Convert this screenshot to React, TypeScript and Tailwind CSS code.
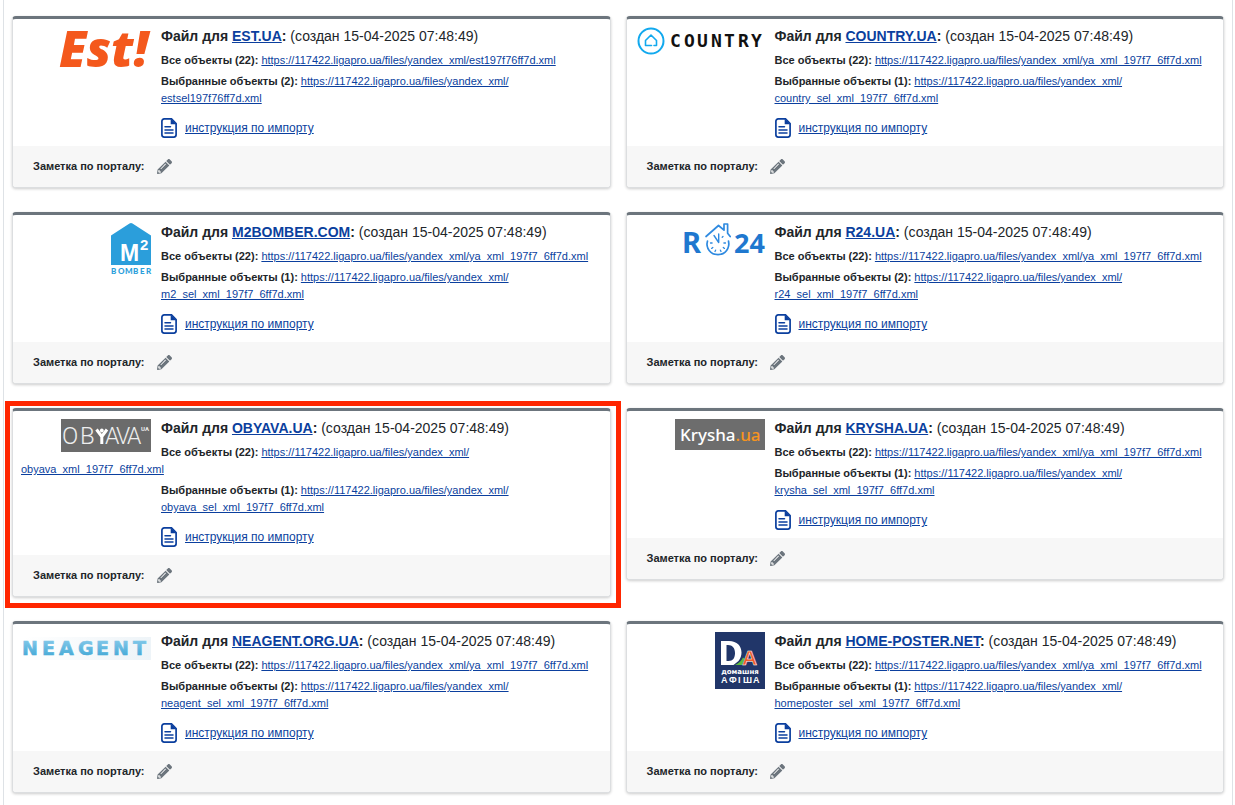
import type { ReactNode } from "react";
import { FaPencilAlt } from "react-icons/fa";

const BASE_URL = "https://117422.ligapro.ua/files/yandex_xml/";
const CREATED_AT = "15-04-2025 07:48:49";

interface Portal {
  name: string;
  logo: ReactNode;
  allFile: string;
  selectedFile: string;
  selectedCount: number;
  highlighted?: boolean;
}

function EstLogo() {
  return (
    <svg width="92" height="44" viewBox="0 0 92 44" overflow="visible" role="img" aria-label="Est!">
      <text x="0" y="40" fontFamily="'Open Sans', sans-serif" fontSize="49" fontWeight="800" fontStyle="italic" fill="#f4581c">
        Est!
      </text>
    </svg>
  );
}

function CountryLogo() {
  return (
    <svg width="128" height="28" viewBox="0 0 128 28" role="img" aria-label="Country">
      <circle cx="14" cy="14" r="12.5" fill="none" stroke="#12a9ee" strokeWidth="2" />
      <path
        d="M8.5 18.5v-5L14 8l5.500 5.500v5h-2.500M8.500 18.500h6"
        fill="none"
        stroke="#12a9ee"
        strokeWidth="1.6"
        strokeLinecap="round"
        strokeLinejoin="round"
      />
      <text
        x="33 47 60 74 87 101 114"
        y="20"
        fontFamily="'DejaVu Sans Mono', monospace"
        fontSize="18"
        fontWeight="700"
        fill="#111"
      >
        COUNTRY
      </text>
    </svg>
  );
}

function M2BomberLogo() {
  return (
    <svg width="40" height="52" viewBox="0 0 40 52" overflow="visible" role="img" aria-label="M2 Bomber">
      <path d="M0 12.5 18.5.6a2.6 2.6 0 0 1 3 0L40 12.5V42H0z" fill="#2b9edb" />
      <text x="9" y="38" fontFamily="'Liberation Sans', sans-serif" fontSize="23" fontWeight="700" fill="#fff">
        M
      </text>
      <text x="29" y="27" fontFamily="'Liberation Sans', sans-serif" fontSize="15" fontWeight="700" fill="#fff">
        2
      </text>
      <text x="0 7 14 22 29 35" y="51" fontFamily="Lato, sans-serif" fontSize="8" fontWeight="900" fill="#2b9edb">
        BOMBER
      </text>
    </svg>
  );
}

function R24Logo() {
  return (
    <svg width="81" height="34" viewBox="0 0 81 34" overflow="visible" role="img" aria-label="R24">
      <g fontFamily="'Noto Sans', sans-serif" fontWeight="700" fill="#1f78cf">
        <text x="-2" y="30" fontSize="29">R</text>
        <text x="50" y="30" fontSize="27">24</text>
      </g>
      <g fill="none" stroke="#2f8ae0" strokeWidth="1.7" strokeLinecap="round" strokeLinejoin="round">
        <path d="M22 13.500 34.500 2.500 40 7.200V1h3.600v9.300l2.600 3.200" />
        <path d="M23.500 18c-2 7 3 13.600 10.500 13.600S46 25 44.500 18" />
        <path d="M30 12.500l4.700 7V11" strokeWidth="1.400" />
        <path
          d="M26.500 20h1.600M41.500 20h-1.600M27.600 25.400l1.200-1M40.500 25.400l-1.200-1M31 28.500l.6-1.300M37 28.500l-.6-1.300M39 13.500l-.8.8"
          strokeWidth="1.300"
        />
      </g>
    </svg>
  );
}

function ObyavaLogo() {
  return (
    <svg width="90" height="33" viewBox="0 0 90 33" role="img" aria-label="Obyava.ua">
      <rect width="90" height="33" fill="#6b6b6b" />
      <g fontFamily="Roboto, sans-serif" fontWeight="300" fill="#eee">
        <text x="1 19" y="25" fontSize="24">
          OB
        </text>
        <text x="44 55 66" y="25" fontSize="23">
          AVA
        </text>
      </g>
      <path d="M35.500 10.500 40.800 17.500v7.500M46 10.500 40.800 17.500" fill="none" stroke="#fff" strokeWidth="3" />
      <circle cx="40.800" cy="11.500" r="1.900" fill="#fff" />
      <text x="80" y="12" fontFamily="Roboto, sans-serif" fontSize="6" fontWeight="700" fill="#eee">
        UA
      </text>
    </svg>
  );
}

function KryshaLogo() {
  return (
    <svg width="90" height="31" viewBox="0 0 90 31" role="img" aria-label="Krysha.ua">
      <rect width="90" height="31" fill="#6d6d6d" />
      <text x="5" y="22" fontFamily="'Noto Sans', sans-serif" fontSize="17" fontWeight="500" fill="#fff">
        Krysha<tspan fill="#f7941d">.ua</tspan>
      </text>
    </svg>
  );
}

function NeagentLogo() {
  return (
    <svg width="128" height="33" viewBox="0 0 128 33" role="img" aria-label="Neagent">
      <defs>
        <linearGradient id="neagent-bg" x1="0" x2="1">
          <stop offset="0" stopColor="#fff" />
          <stop offset="1" stopColor="#eef4f8" />
        </linearGradient>
        <linearGradient id="neagent-text" x1="0" x2="0" y1="0" y2="1">
          <stop offset="0" stopColor="#8ccdec" />
          <stop offset="1" stopColor="#3da5d4" />
        </linearGradient>
      </defs>
      <rect y="5" width="128" height="23" fill="url(#neagent-bg)" />
      <text
        x="-1 19 36 55 73 90 110"
        y="23"
        fontFamily="'DejaVu Sans', sans-serif"
        fontSize="19"
        fontWeight="700"
        fill="url(#neagent-text)"
        stroke="url(#neagent-text)"
        strokeWidth="0.6"
      >
        NEAGENT
      </text>
    </svg>
  );
}

function HomePosterLogo() {
  return (
    <svg width="50" height="57" viewBox="0 0 50 57" role="img" aria-label="Домашня афіша">
      <rect width="50" height="57" fill="#213669" />
      <path
        fillRule="evenodd"
        d="M6 9h8c8 0 12.500 5 12.500 11.500 0 3-1 6-3 8.500l-5 4H6zm5.500 4v16h2c4.500 0 6.500-3 6.500-8s-2.500-8-7-8z"
        fill="#fff"
      />
      <path d="M20 33c4-2 6.500-4.500 8-7.500l1.500 1-2.500 6.500z" fill="#5dbb3c" />
      <text x="27" y="33" fontFamily="'Liberation Sans', sans-serif" fontSize="21" fontWeight="700" fill="#f15a29" stroke="#fff" strokeWidth="0.500">
        А
      </text>
      <text x="25" y="42" textAnchor="middle" fontFamily="'DejaVu Sans', sans-serif" fontSize="7" fontWeight="700" fill="#fff">
        домашня
      </text>
      <text x="6 14 23 28 38" y="51" fontFamily="'Liberation Sans', sans-serif" fontSize="9" fontWeight="700" fill="#fff">
        АФІША
      </text>
    </svg>
  );
}

function FileIcon() {
  return (
    <svg className="shrink-0" width="16" height="20" viewBox="0 0 16 20" aria-hidden="true">
      <path
        d="M3.200.9H10.500L15.100 5.500V16.800a2.300 2.300 0 0 1-2.300 2.300H3.200A2.300 2.300 0 0 1 .9 16.800V3.200A2.300 2.300 0 0 1 3.200.9z"
        fill="none"
        stroke="#0b3f9e"
        strokeWidth="1.700"
      />
      <path d="M9.700 1v5.300H15.500z" fill="#0b3f9e" />
      <path d="M4 8.800h5.500M4 11.900h8M4 15h8" stroke="#0b3f9e" strokeWidth="1.500" strokeLinecap="round" />
    </svg>
  );
}

const PORTALS: Portal[] = [
  { name: "EST.UA", logo: <EstLogo />, allFile: "est197f76ff7d.xml", selectedFile: "estsel197f76ff7d.xml", selectedCount: 2 },
  { name: "COUNTRY.UA", logo: <CountryLogo />, allFile: "ya_xml_197f7_6ff7d.xml", selectedFile: "country_sel_xml_197f7_6ff7d.xml", selectedCount: 1 },
  { name: "M2BOMBER.COM", logo: <M2BomberLogo />, allFile: "ya_xml_197f7_6ff7d.xml", selectedFile: "m2_sel_xml_197f7_6ff7d.xml", selectedCount: 1 },
  { name: "R24.UA", logo: <R24Logo />, allFile: "ya_xml_197f7_6ff7d.xml", selectedFile: "r24_sel_xml_197f7_6ff7d.xml", selectedCount: 2 },
  { name: "OBYAVA.UA", logo: <ObyavaLogo />, allFile: "obyava_xml_197f7_6ff7d.xml", selectedFile: "obyava_sel_xml_197f7_6ff7d.xml", selectedCount: 1, highlighted: true },
  { name: "KRYSHA.UA", logo: <KryshaLogo />, allFile: "ya_xml_197f7_6ff7d.xml", selectedFile: "krysha_sel_xml_197f7_6ff7d.xml", selectedCount: 1 },
  { name: "NEAGENT.ORG.UA", logo: <NeagentLogo />, allFile: "ya_xml_197f7_6ff7d.xml", selectedFile: "neagent_sel_xml_197f7_6ff7d.xml", selectedCount: 2 },
  { name: "HOME-POSTER.NET", logo: <HomePosterLogo />, allFile: "ya_xml_197f7_6ff7d.xml", selectedFile: "homeposter_sel_xml_197f7_6ff7d.xml", selectedCount: 1 },
];

function FileLink({ file }: { file: string }) {
  return (
    <a href={BASE_URL + file} className="font-normal text-[#0b3f9e] underline">
      {BASE_URL}
      <wbr />
      {file}
    </a>
  );
}

function PortalCard({ portal }: { portal: Portal }) {
  return (
    <article className="relative">
      <div className="overflow-hidden rounded-sm border border-t-3 border-[#dcdee0] border-t-[#6c757d] bg-white shadow-[0_1px_3px_rgba(0,0,0,0.2)]">
        <div className="p-2">
          <div className="float-left mr-2.5 flex w-[130px] justify-end">{portal.logo}</div>
          <h2 className="pl-[140px] text-sm leading-[18px] font-bold">
            Файл для{" "}
            <a href={`https://${portal.name.toLowerCase()}`} className="text-[#0b3f9e] underline">
              {portal.name}
            </a>
            : <span className="font-normal">(создан {CREATED_AT})</span>
          </h2>
          {/* no left padding: a long link wraps under the floated logo */}
          <p className="mt-[7px] text-[11px] leading-[17px] font-bold">
            Все объекты (22): <FileLink file={portal.allFile} />
          </p>
          <p className="mt-1 pl-[140px] text-[11px] leading-[17px] font-bold">
            Выбранные объекты ({portal.selectedCount}): <FileLink file={portal.selectedFile} />
          </p>
          <div className="mt-[11px] flex items-center gap-2 pl-[140px]">
            <FileIcon />
            <a href="#import" className="text-xs text-[#0b3f9e] underline">
              инструкция по импорту
            </a>
          </div>
        </div>
        <div className="flex h-[41px] items-center gap-3 bg-[#f7f7f7] px-5 text-[11px] font-bold">
          <span>Заметка по порталу:</span>
          <button type="button" aria-label="Редактировать заметку" className="text-[#6c757d]">
            <FaPencilAlt size={15} />
          </button>
        </div>
      </div>
      {portal.highlighted && (
        <div className="pointer-events-none absolute -top-[7px] -right-2.5 -bottom-[11px] -left-[7px] z-10 border-5 border-[#ff2600]" />
      )}
    </article>
  );
}

export default function App() {
  return (
    <main className="min-h-screen bg-white pr-0.5 pl-[3px] font-['Liberation_Sans',Arial,sans-serif] text-[#212529]">
      <div className="grid min-h-screen grid-cols-2 content-start items-start gap-x-[15px] gap-y-6 border-x border-[#dee2e6] px-2 pt-4">
        {PORTALS.map((portal) => (
          <PortalCard key={portal.name} portal={portal} />
        ))}
      </div>
    </main>
  );
}
